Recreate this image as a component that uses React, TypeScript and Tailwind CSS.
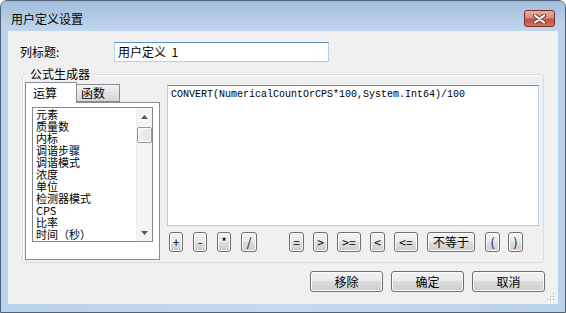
import React from 'react';

type OpButton = {
  label: string;
  cls: string;
};

const listItems = [
  '元素',
  '质量数',
  '内标',
  '调谐步骤',
  '调谐模式',
  '浓度',
  '单位',
  '检测器模式',
  'CPS',
  '比率',
  '时间（秒）',
];

const ops: OpButton[] = [
  { label: '+', cls: 'ml-[2px] w-[14px]' },
  { label: '-', cls: 'ml-[10px] w-[14px]' },
  { label: '*', cls: 'ml-[10px] w-[14px]' },
  { label: '/', cls: 'ml-[10px] w-[16px]' },
  { label: '=', cls: 'ml-[32px] w-[15px]' },
  { label: '>', cls: 'ml-[9px] w-[15px]' },
  { label: '>=', cls: 'ml-[9px] w-[24px]' },
  { label: '<', cls: 'ml-[9px] w-[15px]' },
  { label: '<=', cls: 'ml-[9px] w-[24px]' },
  { label: '不等于', cls: 'ml-[9px] w-[48px]' },
  { label: '(', cls: 'ml-[10px] w-[15px]' },
  { label: ')', cls: 'ml-[8px] w-[15px]' },
];

const btnFace =
  'border border-[#707070] rounded-[3px] bg-[linear-gradient(#f2f2f2_0%,#ebebeb_50%,#dddddd_50%,#cfcfcf_100%)] shadow-[inset_0_0_0_1px_#fbfbfb] flex items-center justify-center leading-none';

function CloseButton() {
  return (
    <div className="mt-[9px] mr-[10px] w-[31px] h-[17px] rounded-[3px] border border-[#7a2f26] bg-[linear-gradient(#e9aea3_0%,#d98a7c_45%,#c4503e_55%,#d2735d_100%)] flex items-center justify-center">
      <svg width="13" height="10" viewBox="0 0 13 10">
        <path d="M2 1.5 L11 8.5 M11 1.5 L2 8.5" stroke="#6b3a34" strokeWidth="4" strokeLinecap="round" />
        <path d="M2 1.5 L11 8.5 M11 1.5 L2 8.5" stroke="#ffffff" strokeWidth="2.2" strokeLinecap="round" />
      </svg>
    </div>
  );
}

function ScrollArrow({ down }: { down?: boolean }) {
  return (
    <svg width="7" height="4" viewBox="0 0 7 4">
      <path d={down ? 'M0 0 L7 0 L3.5 4 Z' : 'M0 4 L7 4 L3.5 0 Z'} fill="#4d5a6a" />
    </svg>
  );
}

export default function App() {
  return (
    <div className="w-[566px] h-[313px] flex flex-col overflow-hidden rounded-t-[7px] border border-[#4f6177] bg-[linear-gradient(90deg,#b9d1ea,#c4d9ef_50%,#b9d1ea)] font-['Noto_Sans_CJK_SC',sans-serif] text-[12px] text-black">
      {/* title bar */}
      <div className="h-[30px] flex items-start justify-between bg-[linear-gradient(#a2bddb,#c0d6ed)]">
        <span className="ml-[10px] mt-[11px] leading-[14px]">用户定义设置</span>
        <CloseButton />
      </div>

      {/* client area */}
      <div className="relative mx-[7px] h-[273px] bg-[#f0f0f0] flex flex-col">
        <div className="mt-[11px] h-[20px] flex items-center">
          <span className="ml-[12px] w-[94px] leading-[14px]">列标题:</span>
          <div className="w-[215px] h-[20px] bg-white border border-[#b4cfe8] border-t-[#5f90c4] pl-[3px] flex items-center leading-[14px] whitespace-pre">
            用户定义  1
          </div>
        </div>

        {/* group box */}
        <div className="mx-[14px] mt-[12px] h-[189px] border border-[#d5dfe5] rounded-[3px] shadow-[inset_1px_1px_0_#ffffff] flex flex-col">
          <span className="-mt-[8px] ml-[5px] px-[2px] w-fit h-[14px] leading-[14px] bg-[#f0f0f0]">公式生成器</span>

          <div className="mt-[1px] pl-[2px] pr-[4px] flex">
            {/* tab control */}
            <div className="w-[135px] flex flex-col">
              <div className="h-[20px] flex items-start">
                <div className="relative z-10 w-[52px] h-[21px] bg-white border border-b-0 border-[#898c95] pl-[7px] pt-[3px] leading-[14px]">
                  运算
                </div>
                <div className="mt-[2px] w-[43px] h-[18px] border border-l-0 border-[#898c95] bg-[linear-gradient(#f3f3f3,#e4e4e4_50%,#d6d6d6)] pl-[4px] pt-[1px] leading-[14px]">
                  函数
                </div>
              </div>
              <div className="h-[158px] bg-white border border-[#898c95] pt-[4px] pl-[6px]">
                <div className="w-[121px] h-[135px] border border-[#828790] flex">
                  <div className="flex-1 pl-[3px] overflow-hidden text-[11px]">
                    {listItems.map((item) => (
                      <div key={item} className="h-[12px] leading-[12px] whitespace-nowrap">
                        {item}
                      </div>
                    ))}
                  </div>
                  <div className="w-[16px] bg-[#f4f4f4] border-l border-[#ececec] flex flex-col items-center">
                    <div className="h-[17px] w-full flex items-center justify-center">
                      <ScrollArrow />
                    </div>
                    <div className="mt-[2px] w-[15px] h-[16px] rounded-[2px] border border-[#979797] bg-[linear-gradient(90deg,#f2f2f2,#e2e2e2)] shadow-[inset_0_0_0_1px_#fbfbfb]" />
                    <div className="flex-1" />
                    <div className="h-[17px] w-full flex items-center justify-center">
                      <ScrollArrow down />
                    </div>
                  </div>
                </div>
              </div>
            </div>

            {/* formula */}
            <div className="ml-[7px] flex-1 flex flex-col">
              <div className="mt-[3px] h-[141px] bg-white border border-[#b4cfe8] border-t-[#5f90c4] pl-[3px] pt-[2px] font-['Liberation_Mono',monospace] text-[10px] leading-[14px]">
                CONVERT(NumericalCountOrCPS*100,System.Int64)/100
              </div>
              <div className="mt-[6px] h-[20px] flex">
                {ops.map((op) => (
                  <div key={op.label} className={`${op.cls} h-[20px] ${btnFace}`}>
                    {op.label}
                  </div>
                ))}
              </div>
            </div>
          </div>
        </div>

        {/* dialog buttons */}
        <div className="mt-[8px] mr-[13px] flex justify-end gap-[8px]">
          <div className={`w-[73px] h-[21px] ${btnFace}`}>移除</div>
          <div className={`w-[73px] h-[21px] ${btnFace}`}>确定</div>
          <div className={`w-[73px] h-[21px] ${btnFace}`}>取消</div>
        </div>

        {/* resize grip */}
        <svg className="absolute right-[2px] bottom-[2px]" width="10" height="10" viewBox="0 0 10 10">
          {[
            [8, 2],
            [5, 5],
            [8, 5],
            [2, 8],
            [5, 8],
            [8, 8],
          ].map(([x, y]) => (
            <g key={`${x}-${y}`}>
              <rect x={x} y={y} width="1" height="1" fill="#ffffff" />
              <rect x={x - 1} y={y - 1} width="1" height="1" fill="#a0a0a0" />
            </g>
          ))}
        </svg>
      </div>
    </div>
  );
}
